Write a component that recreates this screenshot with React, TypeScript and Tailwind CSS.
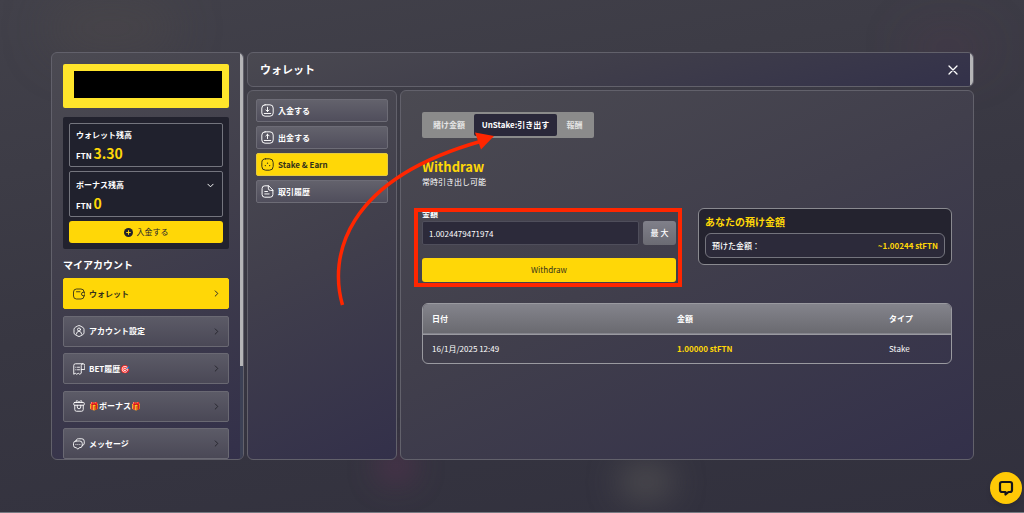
import React from "react";

type IconProps = { className?: string };

const line = {
  fill: "none",
  stroke: "currentColor",
  strokeWidth: 1.8,
  strokeLinecap: "round" as const,
  strokeLinejoin: "round" as const,
};

function WalletIcon({ className }: IconProps) {
  return (
    <svg viewBox="0 0 24 24" className={className} {...line}>
      <path d="M22 8.500V8a6 6 0 0 0-6-6H7a6 6 0 0 0-6 6v8a6 6 0 0 0 6 6h9a6 6 0 0 0 6-6v-.500" />
      <path d="M23 8.500h-2.500a3.500 3.500 0 0 0 0 7H23z" />
      <path d="M7 7.500h7" />
    </svg>
  );
}

function AccountIcon({ className }: IconProps) {
  return (
    <svg viewBox="0 0 24 24" className={className} {...line}>
      <path d="M10 1.600a4 4 0 0 1 4 0l6 3.400A4 4 0 0 1 22 8.500v7a4 4 0 0 1-2 3.500l-6 3.400a4 4 0 0 1-4 0L4 19a4 4 0 0 1-2-3.500v-7A4 4 0 0 1 4 5z" />
      <circle cx="12" cy="9" r="3" />
      <path d="M7 18c.3-3.300 2-5.500 5-5.500s4.700 2.200 5 5.500" />
    </svg>
  );
}

function BetIcon({ className }: IconProps) {
  return (
    <svg viewBox="0 0 24 24" className={className} {...line}>
      <path d="M19.500 1.500H5a3.500 3.500 0 0 0-3.500 3.500v17.500l3-2 3 2 3-2 3 2 3-2V5a3.500 3.500 0 0 1 7 0v8h-7" />
      <path d="M5.500 8.500h.5M9 8.500h4M5.500 13.500h.5M9 13.500h4" />
    </svg>
  );
}

function BonusIcon({ className }: IconProps) {
  return (
    <svg viewBox="0 0 24 24" className={className} {...line}>
      <rect x="1.500" y="5" width="21" height="5.500" rx="1.500" />
      <path d="M3.500 10.500V19a3.500 3.500 0 0 0 3.500 3.500h10a3.500 3.500 0 0 0 3.500-3.500v-8.500M8.500 10.500v3.500a3.500 3.500 0 0 0 7 0v-3.500M6.500 5V2.500a1.500 1.500 0 0 1 2.500-1L12 5l3-3.500a1.500 1.500 0 0 1 2.500 1V5" />
    </svg>
  );
}

function MessageIcon({ className }: IconProps) {
  return (
    <svg viewBox="0 0 24 24" className={className} {...line}>
      <path d="M6 6h7.500a5 5 0 0 1 5 5v3.500a5 5 0 0 1-5 5H12l-2.500 3-2.500-3H6a5 5 0 0 1-5-5V11a5 5 0 0 1 5-5z" />
      <path d="M6 5.500c.5-2.500 2-4 5-4h6.500a5 5 0 0 1 5 5V10c0 3-1.500 4.500-4 5M5.800 13h.2M9.700 13h.2M13.600 13h.2" />
    </svg>
  );
}

function DepositIcon({ className }: IconProps) {
  return (
    <svg viewBox="0 0 24 24" className={className} {...line}>
      <rect x="1.500" y="1.500" width="21" height="21" rx="6" />
      <path d="M12 6v8M9 11l3 3 3-3M6 17.500h12" />
    </svg>
  );
}

function WithdrawIcon({ className }: IconProps) {
  return (
    <svg viewBox="0 0 24 24" className={className} {...line}>
      <rect x="1.500" y="1.500" width="21" height="21" rx="6" />
      <path d="M12 14V6M9 9l3-3 3 3M6 17.500h12" />
    </svg>
  );
}

function StakeIcon({ className }: IconProps) {
  return (
    <svg viewBox="0 0 24 24" className={className} {...line}>
      <rect x="1.500" y="1.500" width="21" height="21" rx="7" />
      <path strokeWidth="2.500" d="M12 9.500h.01M8 14h.01M16 14h.01" />
    </svg>
  );
}

function HistoryIcon({ className }: IconProps) {
  return (
    <svg viewBox="0 0 24 24" className={className} {...line}>
      <path d="M13.500 1.500H7A5 5 0 0 0 2 6.500v11a5 5 0 0 0 5 5h10a5 5 0 0 0 5-5V10z" />
      <path d="M13.500 1.500V6a4 4 0 0 0 4 4H22M7 12h5M7 16.500h8" />
    </svg>
  );
}

function Chevron({ className }: IconProps) {
  return (
    <svg viewBox="0 0 8 8" className={className} {...line} strokeWidth={1.1}>
      <path d="M2.500 1 5.500 4 2.500 7" />
    </svg>
  );
}

const accountItems = [
  { label: "ウォレット", Icon: WalletIcon, active: true },
  { label: "アカウント設定", Icon: AccountIcon, active: false },
  { label: "BET履歴🎯", Icon: BetIcon, active: false },
  { label: "🎁ボーナス🎁", Icon: BonusIcon, active: false },
  { label: "メッセージ", Icon: MessageIcon, active: false },
];

const walletItems = [
  { label: "入金する", Icon: DepositIcon, active: false },
  { label: "出金する", Icon: WithdrawIcon, active: false },
  { label: "Stake & Earn", Icon: StakeIcon, active: true },
  { label: "取引履歴", Icon: HistoryIcon, active: false },
];

const panel = "rounded-md border border-[#62616b] bg-linear-[155deg,#4b4a52_0%,#413f4c_45%,#33304a_100%]";

function Sidebar() {
  return (
    <aside className={`${panel} relative flex w-[193px] shrink-0 flex-col overflow-hidden pt-[11px] pr-[14px] pl-[11px]`}>
      <div className="h-11 shrink-0 rounded-xs bg-[#ffe52b] py-[7px] pr-[7px] pl-[11px]">
        <div className="h-[27px] bg-black" />
      </div>

      <section className="mt-[9px] flex w-full shrink-0 flex-col gap-1 rounded-xs bg-[#22222e] p-[6px]">
        <div className="flex h-11 flex-col justify-end rounded-xs border border-[#74757e] bg-[#20212d] px-[6px]">
          <h3 className="text-[8px] leading-4 font-bold">ウォレット残高</h3>
          <p className="text-[8px] leading-5 font-bold">
            FTN <span className="text-[14px] text-[#ffd707]">3.30</span>
          </p>
        </div>
        <div className="flex h-[46px] flex-col justify-end rounded-xs border border-[#74757e] bg-[#20212d] px-[6px]">
          <h3 className="flex items-center justify-between text-[8px] leading-4 font-bold">
            ボーナス残高
            <Chevron className="mr-[2px] size-[7px] rotate-90" />
          </h3>
          <p className="text-[8px] leading-5 font-bold">
            FTN <span className="text-[14px] text-[#ffd707]">0</span>
          </p>
        </div>
        <button className="flex h-[22px] items-center justify-center gap-1 rounded-[3px] bg-[#ffd707] text-[8px] text-[#22222e]">
          <svg viewBox="0 0 16 16" className="size-[9px]">
            <circle cx="8" cy="8" r="8" fill="#22222e" />
            <path d="M8 4v8M4 8h8" stroke="#ffd707" strokeWidth="1.800" />
          </svg>
          入金する
        </button>
      </section>

      <h2 className="mt-[9px] mb-[6px] shrink-0 text-[10px] leading-[14px] font-bold">マイアカウント</h2>
      <nav className="flex flex-1 flex-col justify-between">
        {accountItems.map(({ label, Icon, active }) => (
          <a
            key={label}
            href="#"
            className={`flex h-[31px] shrink-0 items-center gap-1 rounded-xs border pr-2 pl-[9px] text-[8px] font-bold ${
              active
                ? "border-[#ffd707] bg-[#ffd707] text-[#33301c]"
                : "border-[#6a6973] bg-linear-to-b from-[#5c5b67] to-[#4a4856] text-white"
            }`}
          >
            <Icon className="size-3 shrink-0" />
            <span className="grow">{label}</span>
            <Chevron className="size-[7px] text-[#26252e]" />
          </a>
        ))}
      </nav>
      <div className="absolute top-0 right-0 h-full w-[3px] bg-[#3c4155]">
        <div className="h-[77%] bg-[#b5b5b7]" />
      </div>
    </aside>
  );
}

function WalletNav() {
  return (
    <nav className={`${panel} flex w-[150px] shrink-0 flex-col gap-1 p-2`}>
      {walletItems.map(({ label, Icon, active }) => (
        <a
          key={label}
          href="#"
          className={`flex h-[23px] items-center gap-1 rounded-xs border px-1 text-[8px] font-bold ${
            active
              ? "border-[#e6cb3c] bg-[#ffd707] text-[#33301c]"
              : "border-[#6d6c76] bg-linear-to-b from-[#63626c] to-[#504e5c] text-white"
          }`}
        >
          <Icon className="size-[13px] shrink-0" />
          {label}
        </a>
      ))}
    </nav>
  );
}

function WithdrawForm() {
  return (
    <form className="relative text-[8px]" onSubmit={(e) => e.preventDefault()}>
      <label htmlFor="amount" className="block h-[13px] leading-[11px] font-bold">
        金額
      </label>
      <div className="flex gap-1">
        <input
          id="amount"
          defaultValue="1.0024479471974"
          className="h-6 min-w-0 grow rounded-xs border border-[#4f4e5b] bg-[#2c2a3a] px-[6px] text-white outline-none"
        />
        <button type="button" className="h-6 w-[33px] rounded-[3px] bg-linear-to-b from-[#80808a] to-[#6b6b73] font-medium">
          最 大
        </button>
      </div>
      <button className="mt-[13px] block h-6 w-full rounded-[3px] bg-[#ffd707] text-[#33301c]">Withdraw</button>
      <div className="pointer-events-none absolute top-0 -right-[6px] -bottom-[5px] -left-2 border-4 border-[#ff2600]" />
    </form>
  );
}

function StakePanel() {
  return (
    <main className={`${panel} min-w-0 grow pt-[21px] pr-[21px] pl-[21px]`}>
      <div className="flex h-[26px] w-fit items-center rounded-xs bg-[#8b8b8b] p-[2px] text-[8px] font-bold">
        <button className="h-full w-[50px] text-[#e4e4e4]">賭け金額</button>
        <button className="h-full w-[83px] rounded-xs bg-[#2a283a] whitespace-nowrap">UnStake:引き出す</button>
        <button className="h-full w-[35px] text-[#e4e4e4]">報酬</button>
      </div>

      <h2 className="mt-5 text-[13px] leading-[18px] font-bold text-[#ffd707]">Withdraw</h2>
      <p className="text-[8px] leading-3">常時引き出し可能</p>

      <div className="mt-5 grid grid-cols-2 items-start gap-[22px]">
        <WithdrawForm />
        <section className="rounded-md border border-[#8a8a90] bg-[#24232f] p-[6px]">
          <h3 className="mb-1 text-[10px] leading-[14px] font-bold text-[#ffd707]">あなたの預け金額</h3>
          <div className="flex h-[25px] items-center justify-between rounded-md border border-[#74747d] bg-[#2c2a3a] px-[6px] text-[8px]">
            <span className="font-medium">預けた金額：</span>
            <span className="font-bold text-[#ffd707]">~1.00244 stFTN</span>
          </div>
        </section>
      </div>

      <div className="mt-[21px] overflow-hidden rounded-md border border-[#9a9aa0]">
        <table className="w-full table-fixed text-left text-[8px]">
          <thead>
            <tr className="h-[30px] border-b border-[#9a9aa0] bg-linear-to-b from-[#84848c] to-[#6a6a70]">
              <th className="pl-[9px] font-bold">日付</th>
              <th className="w-[212px] pl-[9px] font-bold">金額</th>
              <th className="w-[71px] pl-[9px] font-bold">タイプ</th>
            </tr>
          </thead>
          <tbody>
            <tr className="h-[29px]">
              <td className="pl-[9px]">16/1月/2025 12:49</td>
              <td className="pl-[9px] font-bold text-[#ffd707]">1.00000 stFTN</td>
              <td className="pl-[9px]">Stake</td>
            </tr>
          </tbody>
        </table>
      </div>
    </main>
  );
}

export default function App() {
  return (
    <div
      lang="ja"
      className="relative flex min-h-screen overflow-hidden border-b border-[#777a82] bg-linear-[170deg,#42414a_0%,#383742_50%,#31303d_100%] pt-[52px] pr-[50px] pb-[52px] pl-[51px] font-['Noto_Sans_CJK_JP','Noto_Sans',sans-serif] text-white"
    >
      <div className="absolute top-0 left-12 h-14 w-32 rounded-full bg-[#55504a]/30 blur-xl" />
      <div className="absolute top-8 right-9 h-8 w-20 rounded-full bg-[#6a3355]/20 blur-xl" />
      <div className="absolute bottom-8 left-[380px] h-7 w-8 rounded-full bg-[#7a2f62]/50 blur-lg" />
      <div className="absolute bottom-3 left-[618px] h-9 w-14 rounded-full bg-[#716d66]/40 blur-lg" />

      <div className="relative flex grow gap-[3px]">
        <Sidebar />
        <div className="flex min-w-0 grow flex-col gap-[3px]">
          <header className="relative flex h-[35px] shrink-0 items-center justify-between overflow-hidden rounded-md border border-[#62616b] bg-linear-[165deg,#4a4951_0%,#3f3d4a_50%,#33314a_100%] pr-[14px] pl-3">
            <h1 className="text-[11px] font-bold">ウォレット</h1>
            <button aria-label="閉じる" className="p-px">
              <svg viewBox="0 0 10 10" className="size-[10px]" fill="none" stroke="white" strokeWidth="1.300" strokeLinecap="round">
                <path d="M1 1l8 8M9 1 1 9" />
              </svg>
            </button>
            <div className="absolute top-0 right-0 h-full w-[3px] bg-[#b5b5b7]" />
          </header>
          <div className="flex grow gap-[3px]">
            <WalletNav />
            <StakePanel />
          </div>
        </div>
      </div>

      <svg viewBox="330 125 170 185" className="pointer-events-none absolute top-[125px] left-[330px] h-[185px] w-[170px]">
        <path d="M342.500 305C329 258 343 180 482 141" fill="none" stroke="#ff2600" strokeWidth="3.500" />
        <path d="M475 132.500 494 136 481 149.500Z" fill="#ff2600" />
      </svg>

      <button aria-label="チャット" className="absolute right-[2px] bottom-2 flex size-8 items-center justify-center rounded-full bg-[#ffc906] shadow-md">
        <svg viewBox="0 0 16 16" className="size-4" fill="none" stroke="#15151c" strokeWidth="2.200" strokeLinejoin="round">
          <path d="M4 2h8a2 2 0 0 1 2 2v6a2 2 0 0 1-2 2h-1.500L7.500 14.500V12H4a2 2 0 0 1-2-2V4a2 2 0 0 1 2-2z" />
        </svg>
      </button>
    </div>
  );
}
